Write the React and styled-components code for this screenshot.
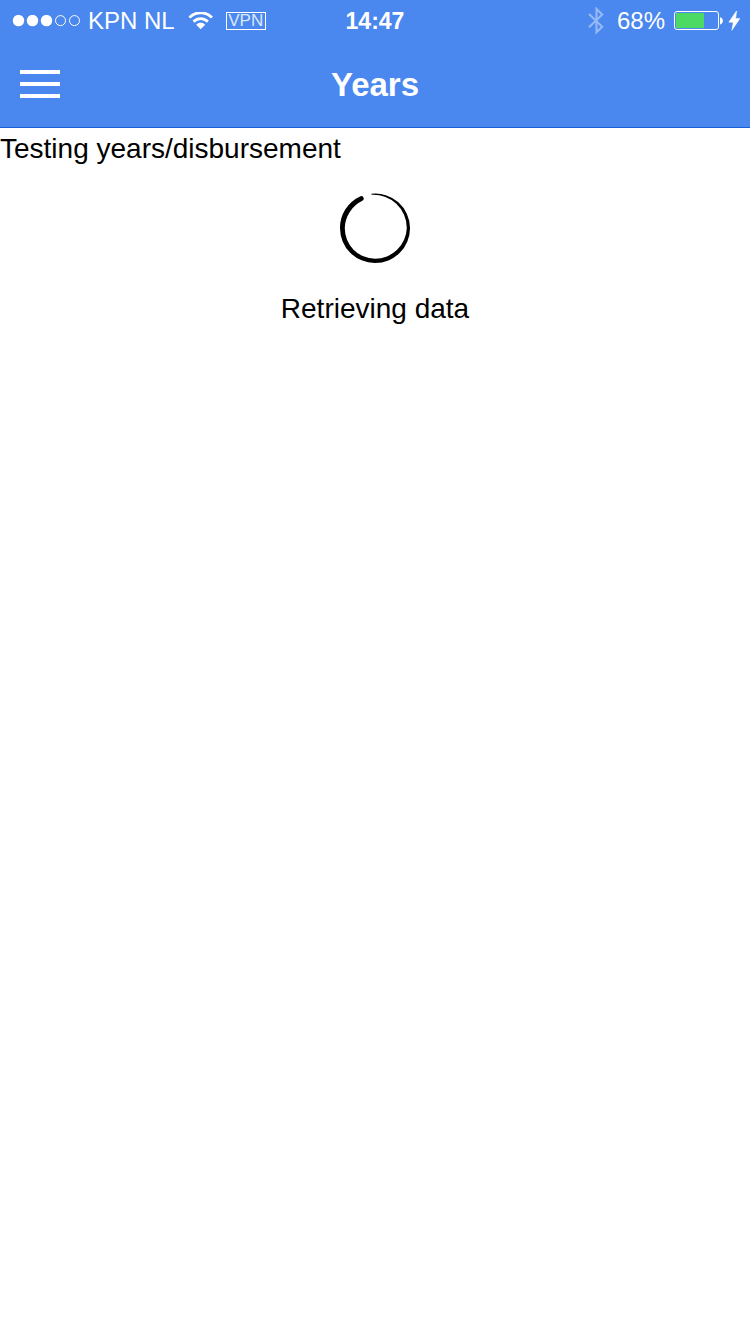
import React from "react";
import styled, { createGlobalStyle } from "styled-components";

const GlobalStyle = createGlobalStyle`
  *, *::before, *::after {
    box-sizing: border-box;
  }
  body {
    margin: 0;
    background: #fff;
    color: #000;
    font-family: "Liberation Sans", Arial, sans-serif;
    font-size: 28px;
    line-height: 42px;
  }
`;

const TopArea = styled.div`
  background: #4a87ee;
  border-bottom: 1px solid #145fd7;
  color: #fff;
`;

const StatusBar = styled.div`
  display: grid;
  grid-template-columns: 1fr auto 1fr;
  align-items: center;
  height: 42px;
  padding: 0 10px;
  font-size: 24px;
`;

const StatusGroup = styled.div`
  display: flex;
  align-items: center;
  justify-content: ${(p) => (p.$end ? "flex-end" : "flex-start")};
  white-space: nowrap;

  svg {
    display: block;
    flex: none;
  }
`;

const Carrier = styled.span`
  margin: 0 13px 0 8px;
`;

const VpnBadge = styled.span`
  display: flex;
  align-items: center;
  justify-content: center;
  width: 40px;
  height: 18px;
  margin-left: 12px;
  border: 1px solid #fff;
  color: #dbe7fc;
  font-size: 17px;
  line-height: 16px;
`;

const Clock = styled.time`
  font-size: 23px;
  font-weight: 700;
`;

const BatteryLevel = styled.span`
  margin: 0 9px 0 11px;
`;

const NavBar = styled.header`
  display: grid;
  grid-template-columns: 1fr auto 1fr;
  align-items: center;
  height: 85px;
  padding: 0 20px;
`;

const MenuButton = styled.button`
  justify-self: start;
  padding: 0;
  border: 0;
  background: none;
  color: inherit;
  cursor: pointer;

  svg {
    display: block;
  }
`;

const Title = styled.h1`
  margin: 0;
  font-size: 33px;
  font-weight: 700;
  line-height: 41px;
`;

const Message = styled.p`
  margin: 0;
`;

const Loading = styled.div`
  display: flex;
  flex-direction: column;
  align-items: center;
  gap: 24px;
  padding-top: 22px;
`;

const SignalIcon = () => (
  <svg width="70" height="12" viewBox="-2 0 70 12" aria-hidden="true">
    {[6.5, 20.5, 34.5].map((x) => (
      <circle key={x} cx={x} cy="5.6" r="5.7" fill="#fff" />
    ))}
    {[48.5, 62.5].map((x) => (
      <circle key={x} cx={x} cy="5.6" r="5" fill="none" stroke="#fff" />
    ))}
  </svg>
);

const WifiIcon = () => (
  <svg width="26" height="18" viewBox="0 0 26 18" fill="none" stroke="#fff" aria-hidden="true">
    <path d="M1.4 5.4C7.8-.8 17.6-.8 24 5.4" strokeWidth="2.8" />
    <path d="M5.5 9.6C9.8 5.6 15.6 5.6 19.9 9.6" strokeWidth="2.8" />
    <path d="M12.7 17.2 8.2 12.7C10.8 10.2 14.6 10.2 17.2 12.7Z" fill="#fff" stroke="none" />
  </svg>
);

const BluetoothIcon = () => (
  <svg width="18" height="28" viewBox="0 0 18 28" fill="none" stroke="#fff" strokeOpacity="0.42" strokeWidth="2.1" aria-hidden="true">
    <path d="M1 7 14.2 19.8 8.5 25.3V1.9L14.2 7.4 1 20.2" />
  </svg>
);

const BatteryIcon = () => (
  <svg width="49" height="20" viewBox="0 0 49 20" aria-hidden="true">
    <rect x="0.5" y="0.5" width="44" height="18" rx="2.5" fill="none" stroke="#fff" />
    <rect x="2" y="2" width="28" height="15" fill="#4cd964" />
    <path d="M46 6.2C49.8 6.6 49.8 13 46 13.4Z" fill="#fff" />
  </svg>
);

const BoltIcon = () => (
  <svg width="17" height="20" viewBox="0 0 17 20" aria-hidden="true">
    <path d="M13.8-.6 5.8 11.2H10.2L8.8 19.4 17 7.4H12.6Z" fill="#fff" stroke="#fff" strokeWidth="0.5" />
  </svg>
);

const MenuIcon = () => (
  <svg width="40" height="29" viewBox="0 0 40 29" fill="currentColor" aria-hidden="true">
    <path d="M0 0H40V4H0ZM0 12H40V16H0ZM0 24H40V28H0Z" />
  </svg>
);

const Spinner = () => (
  <svg width="72" height="72" viewBox="0 0 72 72" role="img" aria-label="Loading">
    <path d="M32.5 1.8A34.6 34.6 0 0 1 71 36A34.8 34.8 0 0 1 36 71A34.9 34.9 0 0 1 1 36A34.7 34.7 0 0 1 21 4.4A2.3 2.3 0 0 1 23.4 8.8A31 31 0 0 0 5.8 36A30.5 30.5 0 0 0 36 66.8A31.8 31.8 0 0 0 67.8 36A33.4 33.4 0 0 0 32.5 2.7Z" />
  </svg>
);

export default function App() {
  return (
    <>
      <GlobalStyle />
      <TopArea>
        <StatusBar>
          <StatusGroup>
            <SignalIcon />
            <Carrier>KPN NL</Carrier>
            <WifiIcon />
            <VpnBadge>VPN</VpnBadge>
          </StatusGroup>
          <Clock>14:47</Clock>
          <StatusGroup $end>
            <BluetoothIcon />
            <BatteryLevel>68%</BatteryLevel>
            <BatteryIcon />
            <BoltIcon />
          </StatusGroup>
        </StatusBar>
        <NavBar>
          <MenuButton type="button" aria-label="Open menu">
            <MenuIcon />
          </MenuButton>
          <Title>Years</Title>
        </NavBar>
      </TopArea>
      <main>
        <Message>Testing years/disbursement</Message>
        <Loading>
          <Spinner />
          <Message role="status">Retrieving data</Message>
        </Loading>
      </main>
    </>
  );
}
